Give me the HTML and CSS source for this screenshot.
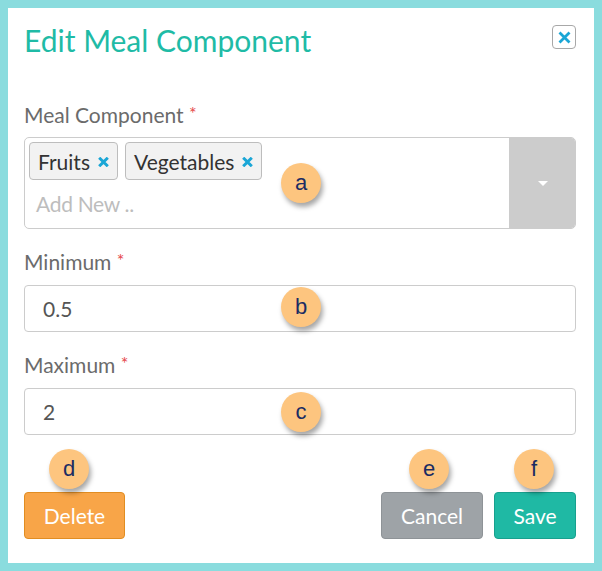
FILE: index.html
```
<!DOCTYPE html>
<html>
<head>
<meta charset="utf-8">
<link rel="stylesheet" href="styles.css">
</head>
<body>
<div class="panel">
  <div class="header">
    <h1 class="title">Edit Meal Component</h1>
    <button class="close" aria-label="Close">
      <svg width="13" height="13" viewBox="0 0 13 13"><path d="M1.5 1.5 L11.5 11.5 M11.5 1.5 L1.5 11.5" stroke="#1aa6d6" stroke-width="2.8"/></svg>
    </button>
  </div>

  <div class="field first">
    <div class="label">Meal Component <span class="req">*</span></div>
    <div class="multi">
      <div class="multi-main">
        <div class="tags">
          <span class="tag"><span>Fruits</span><svg class="tag-x" width="11" height="10" viewBox="0 0 11 10"><path d="M1.2 0.8 L9.8 9.2 M9.8 0.8 L1.2 9.2" stroke="#1aa6d6" stroke-width="3"/></svg></span>
          <span class="tag"><span>Vegetables</span><svg class="tag-x" width="11" height="10" viewBox="0 0 11 10"><path d="M1.2 0.8 L9.8 9.2 M9.8 0.8 L1.2 9.2" stroke="#1aa6d6" stroke-width="3"/></svg></span>
        </div>
        <div class="placeholder">Add New ..</div>
      </div>
      <div class="multi-toggle"><span class="caret"></span></div>
    </div>
  </div>

  <div class="field">
    <div class="label">Minimum <span class="req">*</span></div>
    <div class="input">0.5</div>
  </div>

  <div class="field">
    <div class="label">Maximum <span class="req">*</span></div>
    <div class="input">2</div>
  </div>

  <div class="actions">
    <button class="btn btn-delete">Delete</button>
    <div class="actions-right">
      <button class="btn btn-cancel">Cancel</button>
      <button class="btn btn-save">Save</button>
    </div>
  </div>

  <span class="badge badge-a">a</span>
  <span class="badge badge-b">b</span>
  <span class="badge badge-c">c</span>
  <span class="badge badge-d">d</span>
  <span class="badge badge-e">e</span>
  <span class="badge badge-f">f</span>
</div>
</body>
</html>
```
FILE: styles.css
```
html, body {
  margin: 0;
  padding: 0;
}
body {
  background: #8adcde;
  padding: 8px;
  font-family: Lato, "Open Sans", sans-serif;
}
.panel {
  position: relative;
  background: #ffffff;
  height: 555px;
  box-sizing: border-box;
  padding: 14px 18px 0 16px;
}
.header {
  display: flex;
  justify-content: space-between;
  align-items: flex-start;
}
.title {
  margin: 0;
  font-weight: 400;
  font-size: 30px;
  line-height: 36px;
  color: #1fbba6;
}
.close {
  margin-top: 3px;
  width: 24px;
  height: 24px;
  box-sizing: border-box;
  border: 1px solid #a8a8a8;
  border-radius: 4px;
  background: #fff;
  padding: 0;
  display: flex;
  align-items: center;
  justify-content: center;
}
.field {
  margin-top: 20px;
}
.field.first {
  margin-top: 44px;
}
.label {
  font-size: 21px;
  line-height: 25px;
  height: 25px;
  color: #6b6b6b;
  margin-bottom: 11px;
}
.field.first .label {
  margin-bottom: 10px;
}
.req {
  color: #e64a4d;
  font-size: 18px;
  line-height: 0;
  vertical-align: 3px;
}
.multi {
  display: flex;
  border: 1px solid #cccccc;
  border-radius: 5px;
  overflow: hidden;
}
.multi-main {
  flex: 1;
  padding: 4px 4px 12px 4px;
}
.tags {
  display: flex;
  gap: 7px;
}
.tag {
  display: inline-flex;
  align-items: center;
  gap: 8px;
  height: 38px;
  box-sizing: border-box;
  border: 1px solid #bdbdbd;
  border-radius: 4px;
  background: #f2f2f2;
  padding: 0 8px 0 8px;
  font-size: 21px;
  color: #333333;
}
.tag-x {
  display: block;
  margin-top: 1px;
}
.placeholder {
  margin-top: 11px;
  padding-left: 7px;
  font-size: 21px;
  line-height: 25px;
  color: #bdbdbd;
  letter-spacing: -0.3px;
}
.multi-toggle {
  width: 66px;
  background: #cccccc;
  display: flex;
  align-items: center;
  justify-content: center;
}
.caret {
  width: 0;
  height: 0;
  border-left: 5px solid transparent;
  border-right: 5px solid transparent;
  border-top: 5px solid #ffffff;
  margin-left: 2px;
}
.input {
  height: 47px;
  box-sizing: border-box;
  border: 1px solid #cccccc;
  border-radius: 4px;
  padding: 0 18px;
  display: flex;
  align-items: center;
  font-size: 21px;
  color: #555555;
}
.actions {
  margin-top: 57px;
  display: flex;
  justify-content: space-between;
}
.actions-right {
  display: flex;
  gap: 11px;
}
.btn {
  height: 47px;
  box-sizing: border-box;
  border-radius: 4px;
  border: 1px solid;
  font-family: Lato, "Open Sans", sans-serif;
  font-size: 21px;
  color: #ffffff;
  padding: 0;
}
.btn-delete {
  width: 101px;
  background: #f8a548;
  border-color: #e18d22;
}
.btn-cancel {
  width: 102px;
  background: #9ea3a7;
  border-color: #8e9397;
}
.btn-save {
  width: 82px;
  background: #1fb9a4;
  border-color: #18a08e;
}
.badge {
  position: absolute;
  width: 40px;
  height: 40px;
  border-radius: 50%;
  background: #fdc57f;
  box-shadow: 2px 4px 5px rgba(0, 0, 0, 0.35);
  display: flex;
  align-items: center;
  justify-content: center;
  font-family: "Liberation Sans", Arial, sans-serif;
  font-size: 22px;
  color: #1b2c63;
}
.badge-a { left: 273px; top: 155px; }
.badge-b { left: 273px; top: 279px; }
.badge-c { left: 273px; top: 384px; }
.badge-d { left: 41px; top: 441px; }
.badge-e { left: 401px; top: 441px; }
.badge-f { left: 506px; top: 441px; }
```
